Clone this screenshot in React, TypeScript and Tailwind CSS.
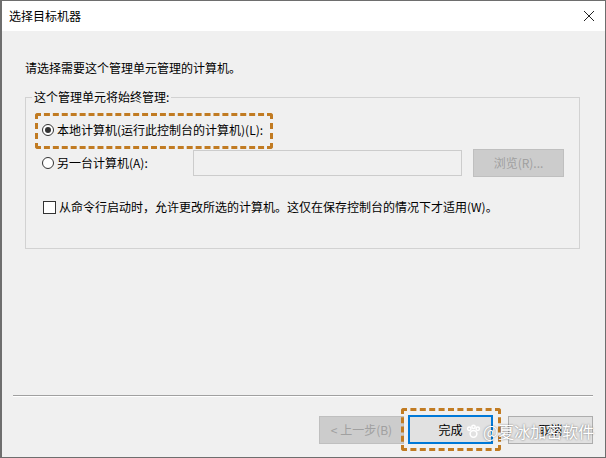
const font = "font-['Microsoft_YaHei','Noto_Sans_CJK_SC',sans-serif]"

const Radio: React.FC<{ checked?: boolean }> = ({ checked }) => (
  <span className="w-[12px] h-[12px] rounded-full border border-[#333333] bg-white flex items-center justify-center shrink-0">
    {checked && <span className="w-[6px] h-[6px] rounded-full bg-[#333333]" />}
  </span>
)

const WatermarkLogo = () => (
  <svg width="15" height="15" viewBox="0 0 16 16" className="shrink-0">
    <g fill="none" stroke="#ffffff" strokeWidth="1.6">
      <circle cx="8" cy="10.5" r="3.6" />
      <circle cx="3.5" cy="5" r="1.8" />
      <circle cx="8" cy="3" r="1.8" />
      <circle cx="12.5" cy="5" r="1.8" />
    </g>
  </svg>
)

export default function App() {
  return (
    <div className={`w-[606px] h-[458px] bg-[#f0f0f0] border border-[#6e6e6e] border-l-2 flex flex-col relative overflow-hidden text-[12px] text-black ${font}`}>
      {/* title bar */}
      <div className="h-[30px] bg-white flex items-center justify-between pl-[7px] pr-[10px] shrink-0">
        <span className="leading-[16px]">选择目标机器</span>
        <svg width="12" height="12" viewBox="0 0 12 12">
          <path d="M1 1 L11 11 M11 1 L1 11" stroke="#222222" strokeWidth="1" />
        </svg>
      </div>

      <div className="flex-1 flex flex-col">
        <p className="mt-[29px] ml-[23px] leading-[16px]">请选择需要这个管理单元管理的计算机。</p>

        <fieldset className="mt-[13px] ml-[23px] w-[555px] border border-[#d2d2d2] pl-[16px] pr-[14px] pb-[33px]">
          <legend className="-ml-[10px] px-[2px] leading-[16px]">这个管理单元将始终管理:</legend>

          <div className="mt-[15px] h-[20px] flex items-center gap-[3px]">
            <Radio checked />
            <span className="leading-[16px]">本地计算机(运行此控制台的计算机)(L):</span>
          </div>

          <div className="mt-[9px] h-[28px] flex items-center">
            <div className="flex items-center gap-[3px] w-[151px]">
              <Radio />
              <span className="leading-[16px]">另一台计算机(A):</span>
            </div>
            <div className="w-[269px] h-[26px] border border-[#cccccc] bg-[#f0f0f0]" />
            <div className="ml-[11px] w-[91px] h-[28px] bg-[#cccccc] border border-[#bfbfbf] flex items-center justify-center text-[#a0a0a0] leading-[16px]">
              浏览(R)...
            </div>
          </div>

          <div className="mt-[22px] h-[16px] flex items-center gap-[3px]">
            <span className="w-[13px] h-[13px] border border-[#333333] bg-white shrink-0 ml-[1px]" />
            <span className="leading-[16px]">从命令行启动时，允许更改所选的计算机。这仅在保存控制台的情况下才适用(W)。</span>
          </div>
        </fieldset>

        <div className="mt-auto ml-[11px] mr-[12px] h-[2px] border-t border-[#a0a0a0] border-b border-b-white" />

        <div className="mt-[18px] mb-[13px] flex items-center justify-end pr-[12px]">
          <div className="w-[85px] h-[28px] bg-[#cccccc] border border-[#bfbfbf] flex items-center justify-center text-[#a0a0a0] leading-[16px]">
            &lt; 上一步(B)
          </div>
          <div className="ml-[4px] w-[85px] h-[29px] bg-[#e1e1e1] border-2 border-[#0078d7] flex items-center justify-center leading-[16px]">
            完成
          </div>
          <div className="ml-[15px] w-[85px] h-[28px] bg-[#e1e1e1] border border-[#adadad] flex items-center justify-center leading-[16px]">
            取消
          </div>
        </div>
      </div>

      {/* annotation highlights */}
      <div className="absolute left-[33px] top-[112px] w-[238px] h-[36px] border-[3px] border-dashed border-[#c17b22] rounded-[3px]" />
      <div className="absolute left-[399px] top-[407px] w-[100px] h-[43px] border-[3px] border-dashed border-[#c17b22] rounded-[3px]" />

      {/* watermark */}
      <div className="absolute left-[464px] top-[420px] flex items-center gap-[2px] text-white text-[16px] leading-[20px] [text-shadow:0_0_2px_rgba(0,0,0,0.55)]">
        <WatermarkLogo />
        <span>@夏冰加密软件</span>
      </div>
    </div>
  )
}
